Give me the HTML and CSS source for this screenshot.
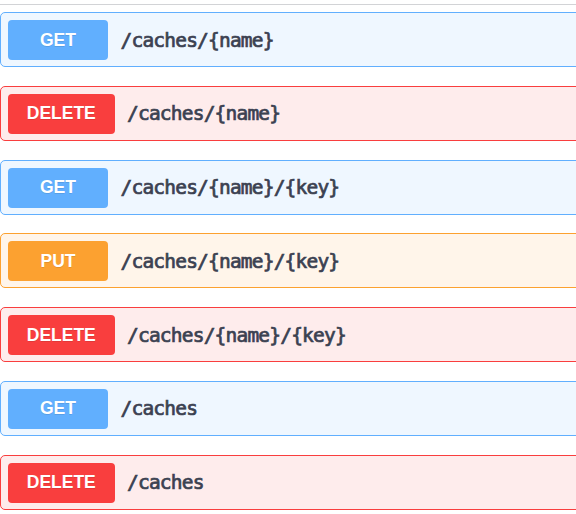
FILE: index.html
```html
<!DOCTYPE html>
<html>
<head>
<meta charset="utf-8">
<link rel="stylesheet" href="styles.css">
</head>
<body>
<div class="tag-rule"></div>
<div class="ops">
  <div class="op op-get"><span class="method">GET</span><span class="path">/caches/{name}</span></div>
  <div class="op op-delete"><span class="method">DELETE</span><span class="path">/caches/{name}</span></div>
  <div class="op op-get"><span class="method">GET</span><span class="path">/caches/{name}/{key}</span></div>
  <div class="op op-put"><span class="method">PUT</span><span class="path">/caches/{name}/{key}</span></div>
  <div class="op op-delete"><span class="method">DELETE</span><span class="path">/caches/{name}/{key}</span></div>
  <div class="op op-get"><span class="method">GET</span><span class="path">/caches</span></div>
  <div class="op op-delete"><span class="method">DELETE</span><span class="path">/caches</span></div>
</div>
</body>
</html>
```
FILE: styles.css
```css
html, body {
  margin: 0;
  padding: 0;
  background: #ffffff;
  overflow: hidden;
}
body {
  width: 576px;
  height: 514px;
}
.tag-rule {
  height: 4px;
  border-bottom: 1px solid #d2d3d6;
}
.ops {
  padding-top: 7px;
  display: flex;
  flex-direction: column;
  gap: 18.8px;
}
.op {
  width: 620px;
  box-sizing: border-box;
  height: 55px;
  flex: none;
  border: 1px solid;
  border-radius: 5px;
  padding: 7px 7px 6px 7px;
  display: flex;
  align-items: center;
}
.method {
  min-width: 100px;
  height: 40px;
  box-sizing: border-box;
  padding: 0 18.75px;
  border-radius: 4px;
  display: flex;
  align-items: center;
  justify-content: center;
  color: #ffffff;
  font-family: "Liberation Sans", Arial, sans-serif;
  font-weight: 700;
  font-size: 17.5px;
  text-shadow: 0 1px 0 rgba(0, 0, 0, 0.1);
}
.path {
  padding: 0 12.5px;
  font-family: "DejaVu Sans Mono", monospace;
  font-weight: 400;
  font-size: 19.5px;
  letter-spacing: -0.8px;
  -webkit-text-stroke: 0.7px #3b4151;
  color: #3b4151;
}
.op-get {
  background: #eff7ff;
  border-color: #61affe;
}
.op-get .method { background: #61affe; }
.op-delete {
  background: #feecec;
  border-color: #f93e3e;
}
.op-delete .method { background: #f93e3e; }
.op-put {
  background: #fff5ea;
  border-color: #fca130;
}
.op-put .method { background: #fca130; }
```
